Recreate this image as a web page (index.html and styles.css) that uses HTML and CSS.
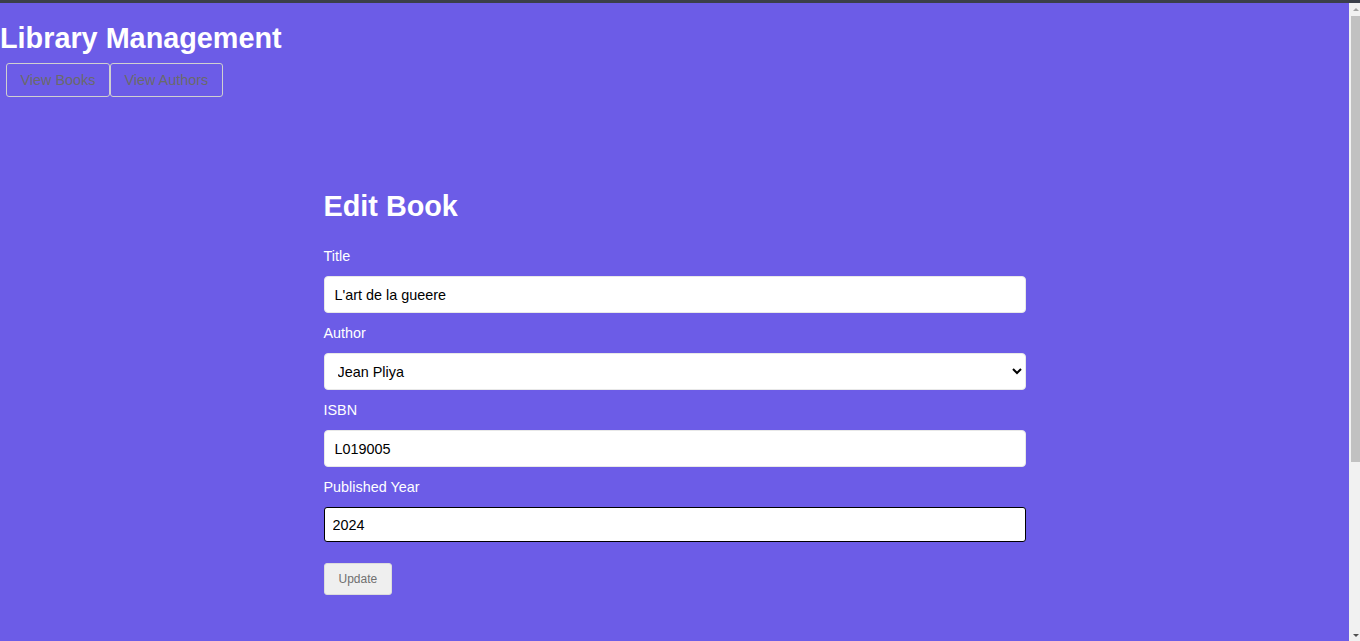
FILE: index.html
```html
<!DOCTYPE html>
<html lang="en">
<head>
<meta charset="utf-8">
<title>Library Management</title>
<link rel="stylesheet" href="styles.css">
</head>
<body>
<div class="topbar"></div>
<div class="frame">
  <div class="viewport">
    <header class="site-header">
      <h1 class="site-title">Library Management</h1>
      <nav class="nav">
        <button class="nav-btn" type="button">View Books</button>
        <button class="nav-btn" type="button">View Authors</button>
      </nav>
    </header>
    <main class="card">
      <h1 class="card-title">Edit Book</h1>
      <form class="form">
        <label class="label" for="title">Title</label>
        <input class="field" id="title" type="text" value="L'art de la gueere">
        <label class="label" for="author">Author</label>
        <select class="field select" id="author">
          <option>Jean Pliya</option>
        </select>
        <label class="label" for="isbn">ISBN</label>
        <input class="field" id="isbn" type="text" value="L019005">
        <label class="label" for="year">Published Year</label>
        <input class="field field-focus" id="year" type="text" value="2024">
        <div class="actions">
          <button class="update-btn" type="button">Update</button>
        </div>
      </form>
    </main>
  </div>
  <div class="scrollbar" aria-hidden="true">
    <div class="sb-arrow sb-up"></div>
    <div class="sb-track">
      <div class="sb-thumb"></div>
    </div>
    <div class="sb-arrow sb-down"></div>
  </div>
</div>
</body>
</html>
```
FILE: styles.css
```css
* { box-sizing: border-box; }
html, body {
  margin: 0;
  padding: 0;
  height: 100%;
  overflow: hidden;
  font-family: "Liberation Sans", Arial, sans-serif;
}
body {
  display: flex;
  flex-direction: column;
  background: #6c5ce7;
}
.topbar {
  height: 3px;
  flex: none;
  background: #3b3f4a;
}
.frame {
  flex: 1;
  display: flex;
  min-height: 0;
}
.viewport {
  flex: 1;
  min-width: 0;
  overflow: hidden;
  background: #6c5ce7;
}
.scrollbar {
  width: 11px;
  flex: none;
  display: flex;
  flex-direction: column;
  background: #f1f1f1;
}
.sb-arrow {
  height: 12px;
  flex: none;
  display: flex;
  align-items: center;
  justify-content: center;
  padding-left: 2px;
}
.sb-up::before {
  content: "";
  border-left: 3px solid transparent;
  border-right: 3px solid transparent;
  border-bottom: 3px solid #a3a3a3;
}
.sb-down::before {
  content: "";
  border-left: 3px solid transparent;
  border-right: 3px solid transparent;
  border-top: 3px solid #505050;
}
.sb-track {
  flex: 1;
  padding: 1px 0 0 2px;
}
.sb-thumb {
  height: 446px;
  background: #c1c1c1;
}
.site-title {
  margin: 19px 0 8px 0;
  font-size: 28.8px;
  font-weight: bold;
  color: #fff;
  line-height: 33px;
}
.nav {
  display: flex;
  margin-left: 6px;
}
.nav-btn {
  height: 34px;
  padding: 0 13.5px;
  background: transparent;
  border: 1px solid #d0d0d0;
  border-radius: 3px;
  color: #6a6a6a;
  font-family: "Liberation Sans", Arial, sans-serif;
  font-size: 14.4px;
}
.card {
  width: 702px;
  margin: 93px auto 0;
}
.card-title {
  margin: 0 0 25px 0;
  font-size: 28.8px;
  line-height: 33px;
  font-weight: bold;
  color: #fff;
}
.form {
  display: flex;
  flex-direction: column;
}
.label {
  display: block;
  color: #fff;
  font-size: 14.4px;
  line-height: 17px;
  margin-bottom: 11px;
}
.field {
  width: 100%;
  height: 37px;
  margin: 0 0 12px 0;
  padding: 0 10px;
  border: 1px solid #e8e8e8;
  border-radius: 4px;
  background: #fff;
  color: #000;
  font-family: "Liberation Sans", Arial, sans-serif;
  font-size: 14.4px;
  outline: none;
}
.select {
  padding: 0 6px 0 9px;
}
.field-focus {
  height: 35px;
  margin-bottom: 21px;
  padding: 0 8px;
  border: 1px solid #000;
  border-radius: 3px;
}
.actions {
  display: flex;
}
.update-btn {
  height: 32px;
  padding: 0 14px;
  background: #efefef;
  border: 1px solid #dcdcdc;
  border-radius: 3px;
  color: #707070;
  font-family: "Liberation Sans", Arial, sans-serif;
  font-size: 12px;
}
```
